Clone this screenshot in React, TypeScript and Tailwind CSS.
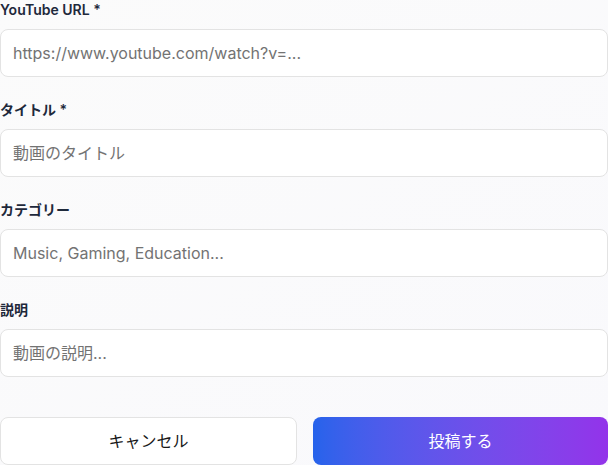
import { useState } from 'react';

const FIELDS = [
  { key: 'url', label: 'YouTube URL *', placeholder: 'https://www.youtube.com/watch?v=...' },
  { key: 'title', label: 'タイトル *', placeholder: '動画のタイトル' },
  { key: 'category', label: 'カテゴリー', placeholder: 'Music, Gaming, Education...' },
  { key: 'description', label: '説明', placeholder: '動画の説明...' },
];

export default function App() {
  const [values, setValues] = useState<Record<string, string>>({});

  return (
    <div
      className="min-h-[465px] w-[608px] bg-gradient-to-br from-[#fbfbfb] to-[#f9f9fc] text-slate-800"
      style={{ fontFamily: 'Inter, "Noto Sans CJK JP", sans-serif' }}
    >
      <form onSubmit={e => e.preventDefault()}>
        <div className="flex flex-col gap-[23px]">
          {FIELDS.map(f => (
            <div key={f.key}>
              <label className="block text-sm leading-5 font-semibold text-[#1e293b] mb-[9px]">{f.label}</label>
              <input
                type="text"
                value={values[f.key] || ''}
                onChange={e => setValues({ ...values, [f.key]: e.target.value })}
                placeholder={f.placeholder}
                className="block w-full h-12 px-3 rounded-lg border border-[#e3e3e3] bg-white text-base text-gray-900 placeholder:text-[#737373] outline-none"
              />
            </div>
          ))}
        </div>

        <div className="flex gap-4 mt-10">
          <button
            type="button"
            onClick={() => setValues({})}
            className="flex-1 h-12 rounded-lg border border-[#e3e3e3] bg-white text-base font-normal text-[#171717]"
          >
            キャンセル
          </button>
          <button
            type="submit"
            className="flex-1 h-12 rounded-lg bg-gradient-to-r from-[#2563eb] to-[#9333ea] text-base font-normal text-white"
          >
            投稿する
          </button>
        </div>
      </form>
    </div>
  );
}
